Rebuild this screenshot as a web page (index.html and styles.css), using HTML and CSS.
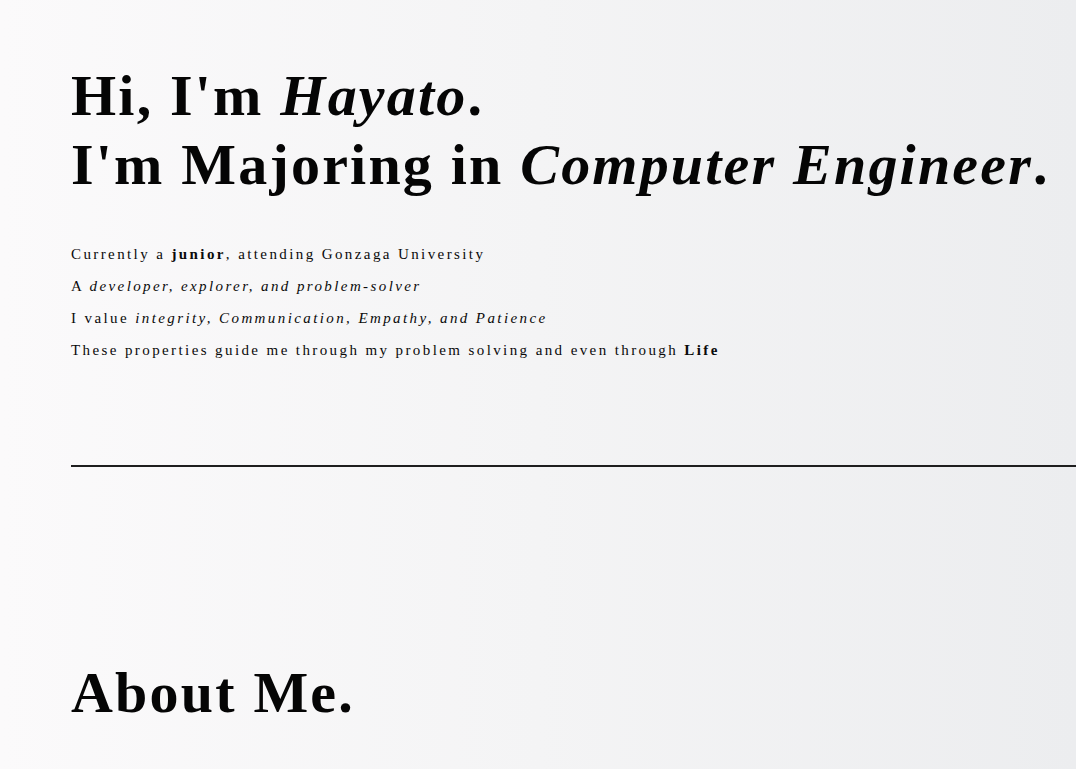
FILE: index.html
```html
<!DOCTYPE html>
<html lang="en">
<head>
<meta charset="utf-8">
<title>Hayato</title>
<link rel="stylesheet" href="styles.css">
</head>
<body>
<main class="page">
  <section class="hero">
    <h1 class="hero-title">Hi, I'm <em>Hayato</em>.<br>I'm Majoring in <em>Computer Engineer</em>.</h1>
    <div class="intro">
      <p>Currently a <strong>junior</strong>, attending Gonzaga University</p>
      <p>A <em>developer, explorer, and problem-solver</em></p>
      <p>I value <em>integrity, Communication, Empathy, and Patience</em></p>
      <p>These properties guide me through my problem solving and even through <strong>Life</strong></p>
    </div>
  </section>
  <div class="divider"></div>
  <section class="about">
    <h2 class="about-title">About Me.</h2>
  </section>
</main>
</body>
</html>
```
FILE: styles.css
```css
html, body {
  margin: 0;
  padding: 0;
}
body {
  min-height: 100vh;
  background: linear-gradient(90deg, #fbfafb 0%, #f4f4f5 50%, #ecedef 100%);
  color: #0a0a0a;
  font-family: "Liberation Serif", "Times New Roman", serif;
  overflow: hidden;
}
.page {
  padding-left: 71px;
}
.hero {
  padding-top: 61px;
}
.hero-title {
  margin: 0;
  font-size: 58px;
  line-height: 69px;
  font-weight: 700;
  letter-spacing: 2.2px;
  color: #050505;
}
.hero-title em {
  font-style: italic;
}
.intro {
  margin-top: 39px;
}
.intro p {
  margin: 0;
  font-size: 15px;
  line-height: 32px;
  letter-spacing: 2.4px;
}
.divider {
  margin-top: 99px;
  border-top: 2px solid #1e1e1e;
}
.about {
  padding-top: 191px;
}
.about-title {
  margin: 0;
  font-size: 58px;
  line-height: 69px;
  font-weight: 700;
  letter-spacing: 2.2px;
  color: #050505;
}
```
